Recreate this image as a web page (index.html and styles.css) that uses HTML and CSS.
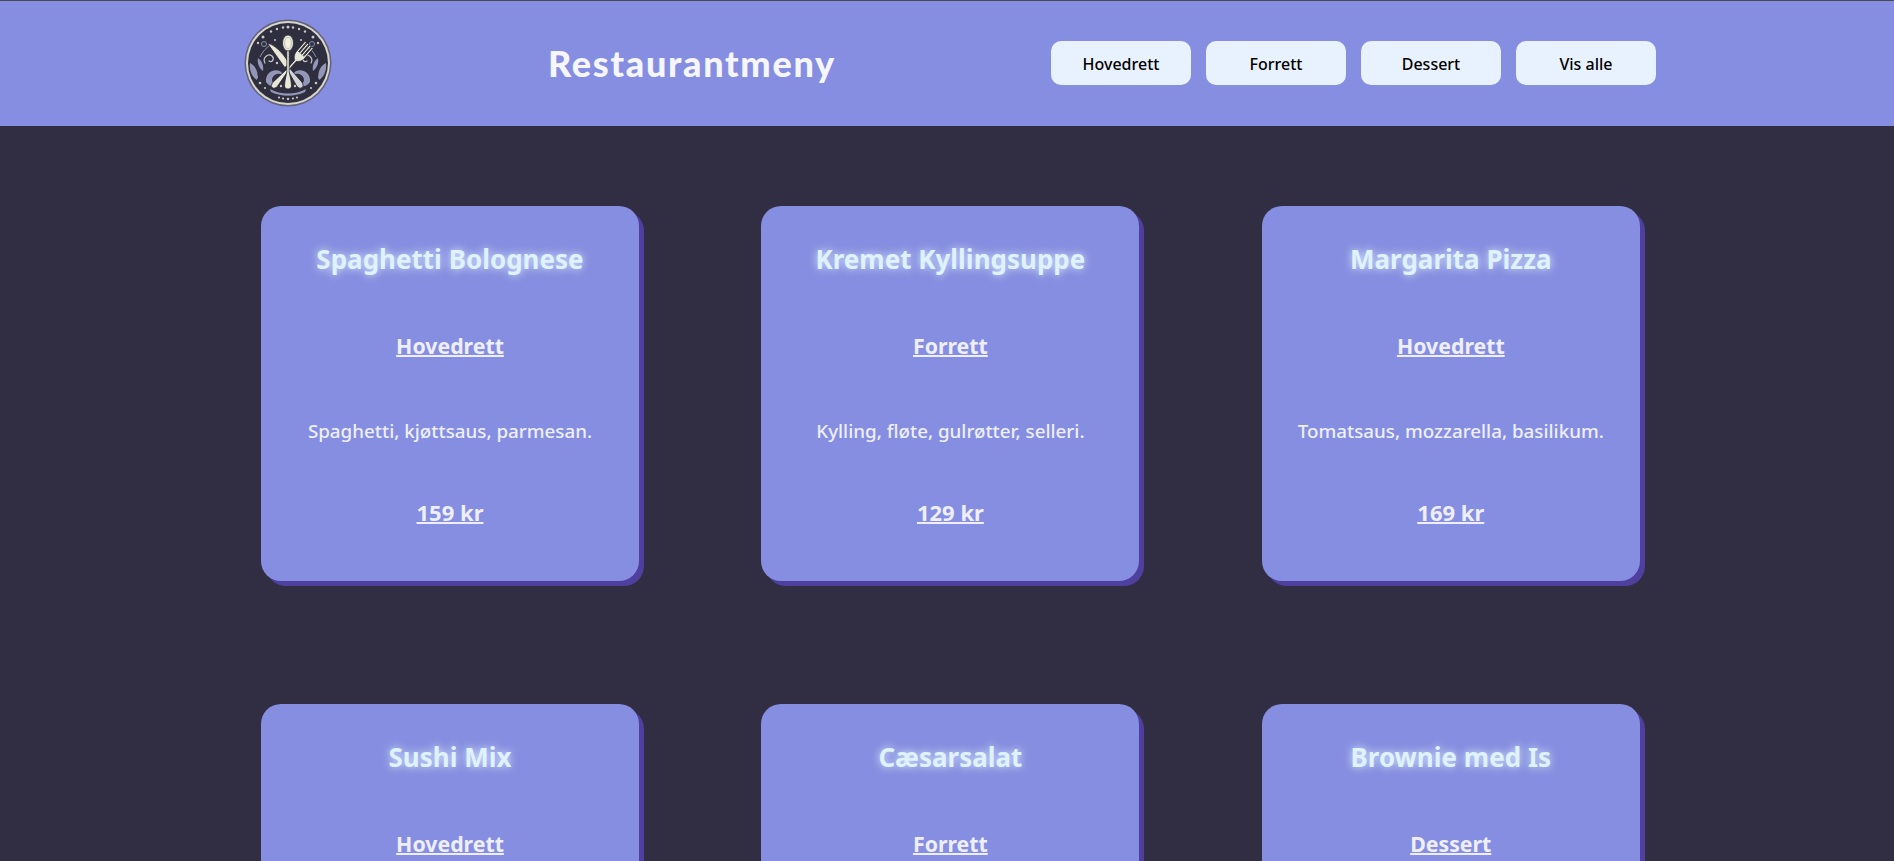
FILE: index.html
```html
<!DOCTYPE html>
<html lang="no">
<head>
<meta charset="utf-8">
<title>Restaurantmeny</title>
<link rel="stylesheet" href="styles.css">
</head>
<body>
<header class="topbar">
  <svg class="logo" viewBox="0 0 88 88" aria-label="Logo">
    <circle cx="44" cy="44" r="43.500" fill="#62637c"/>
    <circle cx="44" cy="44" r="42" fill="#d8d6c9"/>
    <circle cx="44" cy="44" r="40" fill="#2e2e3e"/>
    <g fill="#c9c8c6">
      <circle cx="44" cy="8" r="1.500"/><circle cx="39" cy="8.500" r="1.200"/><circle cx="49" cy="8.500" r="1.200"/>
      <circle cx="33" cy="10" r="1.200"/><circle cx="55" cy="10" r="1.200"/><circle cx="27" cy="12.500" r="1.200"/><circle cx="61" cy="12.500" r="1.200"/>
      <circle cx="19" cy="18" r="1.500"/><circle cx="69" cy="18" r="1.500"/><circle cx="14" cy="24" r="1.200"/><circle cx="74" cy="24" r="1.200"/>
      <circle cx="10" cy="52" r="1.100"/><circle cx="78" cy="52" r="1.100"/><circle cx="12.500" cy="58" r="1.300"/><circle cx="75.500" cy="58" r="1.300"/>
      <circle cx="16" cy="64" r="1.300"/><circle cx="72" cy="64" r="1.300"/><circle cx="21" cy="69" r="1.100"/><circle cx="67" cy="69" r="1.100"/>
    </g>
    <g fill="none" stroke="#8e90ad" stroke-width="1">
      <circle cx="20" cy="25" r="2.500"/><circle cx="68" cy="25" r="2.500"/>
      <path d="M16 38a29 29 0 0 1 12-13M72 38a29 29 0 0 0-12-13"/>
    </g>
    <g fill="#9496b8">
      <path d="M6 44c6 3 9 10 7 17-5-3-8-10-7-17zM82 44c-6 3-9 10-7 17 5-3 8-10 7-17z"/>
      <path d="M14 39c4 3 6 8 5 13-4-3-6-8-5-13zM74 39c-4 3-6 8-5 13 4-3 6-8 5-13z"/>
      <path d="M22 63c-1-8 6-14 14-11l4 4c-6-3-12 0-12 5 0 3 3 5 6 3-1 4-8 5-12-1zM66 63c1-8-6-14-14-11l-4 4c6-3 12 0 12 5 0 3-3 5-6 3 1 4 8 5 12-1z"/>
      <path d="M26 70c11 6 25 6 36 0l-1 3c-11 5-23 5-34 0z"/>
    </g>
    <g fill="none" stroke="#c9c8c6" stroke-width="1.200" stroke-linecap="round">
      <path d="M21 44c-3-5 3-10 7-7 3 3 0 7-3 5M67 44c3-5-3-10-7-7-3 3 0 7 3 5"/>
    </g>
    <g fill="#c9c8c6">
      <circle cx="35" cy="78.500" r="1.100"/><circle cx="39" cy="79.500" r="1.100"/><circle cx="44" cy="80" r="1.200"/><circle cx="49" cy="79.500" r="1.100"/><circle cx="53" cy="78.500" r="1.100"/>
      <circle cx="33" cy="44" r="1.200"/><circle cx="31" cy="21" r="1"/><circle cx="57" cy="21" r="1"/><circle cx="37" cy="67" r="1.200"/><circle cx="51" cy="67" r="1.200"/>
    </g>
    <g stroke="#1f1f2c" stroke-width=".7" fill="#e9e7d8">
      <g transform="translate(40 44) rotate(-35.600)">
        <path d="M-2-26C3-20 5-10 4 1L2 4H-2z"/>
        <path d="M-1 6H1.400L3.400 26C3.400 32-3 32-3 26z" fill="#d3d2d6"/>
      </g>
      <g transform="translate(49.500 44) rotate(40.700)">
        <path d="M-5.400-24h1.800v12h1.200v-12h1.800v12h1.200v-12h1.800v12h1.200v-12h1.800v13c0 5-3 7-4.400 8L1-3V9L3 28c0 6-6 6-6 0L-1 9V-3c-1.400-1-4.400-3-4.400-8z"/>
      </g>
      <path d="M42.800 31h2.400v22l1.800 9 .5 5c-.3 4-6.700 4-7 0l.5-5 1.800-9z"/>
      <ellipse cx="44" cy="24" rx="5.500" ry="8"/>
    </g>
    <ellipse cx="44" cy="24" rx="3.400" ry="5.600" fill="#f1efdf" stroke="#a8a79a" stroke-width=".6"/>
  </svg>
  <h1 class="brand">Restaurantmeny</h1>
  <nav class="filters">
    <button class="filter" type="button">Hovedrett</button>
    <button class="filter" type="button">Forrett</button>
    <button class="filter" type="button">Dessert</button>
    <button class="filter" type="button">Vis alle</button>
  </nav>
</header>
<main class="menu">
  <article class="card">
    <h2 class="dish">Spaghetti Bolognese</h2>
    <h3 class="tag">Hovedrett</h3>
    <p class="desc">Spaghetti, kjøttsaus, parmesan.</p>
    <h3 class="price">159 kr</h3>
  </article>
  <article class="card">
    <h2 class="dish">Kremet Kyllingsuppe</h2>
    <h3 class="tag">Forrett</h3>
    <p class="desc">Kylling, fløte, gulrøtter, selleri.</p>
    <h3 class="price">129 kr</h3>
  </article>
  <article class="card">
    <h2 class="dish">Margarita Pizza</h2>
    <h3 class="tag">Hovedrett</h3>
    <p class="desc">Tomatsaus, mozzarella, basilikum.</p>
    <h3 class="price">169 kr</h3>
  </article>
  <article class="card">
    <h2 class="dish">Sushi Mix</h2>
    <h3 class="tag">Hovedrett</h3>
  </article>
  <article class="card">
    <h2 class="dish">Cæsarsalat</h2>
    <h3 class="tag">Forrett</h3>
  </article>
  <article class="card">
    <h2 class="dish">Brownie med Is</h2>
    <h3 class="tag">Dessert</h3>
  </article>
</main>
</body>
</html>
```
FILE: styles.css
```css
* { box-sizing: border-box; }
html, body { height: 100%; overflow: hidden; }
body {
  margin: 0;
  background: #312e44;
  font-family: "Noto Sans", "Open Sans", sans-serif;
}
.topbar {
  display: flex;
  align-items: center;
  height: 126px;
  padding: 0 0 1px 244px;
  background: #858ee0;
  border-top: 1px solid #4a4a55;
}
.logo { width: 88px; height: 88px; flex: none; filter: blur(.35px); }
.brand {
  margin: 0 0 0 216px;
  width: 503px;
  color: #f5f6ff;
  font-family: Lato, sans-serif;
  font-size: 36px;
  font-weight: 900;
  letter-spacing: 1.7px;
}
.filters { display: flex; gap: 15px; }
.filter {
  width: 140px;
  height: 44px;
  padding: 2px 0 0;
  border: 0;
  border-radius: 10px;
  background: #e8f2ff;
  color: #000;
  font-family: inherit;
  font-size: 16px;
  font-weight: 500;
}
.menu {
  display: grid;
  grid-template-columns: repeat(3, 378px);
  column-gap: 122.400px;
  row-gap: 123px;
  padding: 80px 0 0 261px;
}
.card {
  height: 375px;
  padding-top: 35px;
  border-radius: 20px;
  background: #858ee0;
  box-shadow: 5px 5px 0 #4f3f9f;
  text-align: center;
  color: #eeeeff;
}
.dish {
  margin: 0;
  color: #def2ff;
  font-size: 26px;
  line-height: 36px;
  font-weight: 700;
  text-shadow: 0 0 8px #e0f0ff;
}
.tag, .price {
  margin: 0;
  line-height: 30px;
  font-weight: 700;
  text-decoration: underline;
  text-decoration-thickness: 2px;
}
.tag { margin-top: 54px; font-size: 21.300px; }
.desc {
  margin: 57px 0 0;
  font-size: 18.800px;
  line-height: 26px;
  font-weight: 500;
}
.price { margin-top: 53px; font-size: 22px; }
```
